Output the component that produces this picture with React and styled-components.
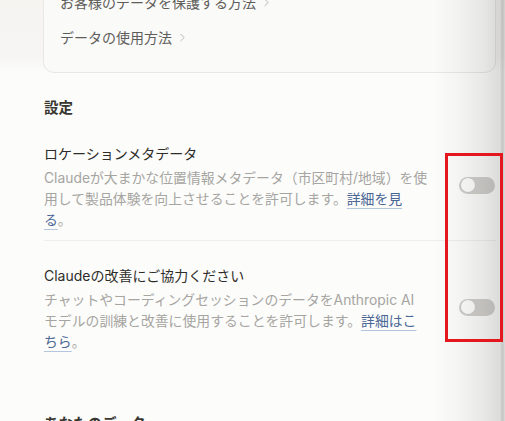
import React from 'react'
import styled, { createGlobalStyle } from 'styled-components'
import { ChevronRight } from 'lucide-react'

const GlobalStyle = createGlobalStyle`
  html, body {
    margin: 0;
    padding: 0;
    background: #fcfcfb;
  }
  body {
    font-family: "Inter", "Noto Sans CJK JP", sans-serif;
    -webkit-font-smoothing: antialiased;
  }
`

// line breaks follow the original wrap of the narrow settings column
const settings = [
  {
    title: 'ロケーションメタデータ',
    body: 'Claudeが大まかな位置情報メタデータ（市区町村/地域）を使\n用して製品体験を向上させることを許可します。',
    link: '詳細を見\nる',
  },
  {
    title: 'Claudeの改善にご協力ください',
    body: 'チャットやコーディングセッションのデータをAnthropic AI\nモデルの訓練と改善に使用することを許可します。',
    link: '詳細はこ\nちら',
  },
]

export default function App() {
  return (
    <>
      <GlobalStyle />
      <Page>
        <Content>
          <InfoCard>
            <CardLink>
              お客様のデータを保護する方法 <ChevronRight size={13} strokeWidth={1.4} />
            </CardLink>
            <CardLink>
              データの使用方法 <ChevronRight size={13} strokeWidth={1.4} />
            </CardLink>
          </InfoCard>

          <SectionTitle>設定</SectionTitle>
          <SettingsList>
            {settings.map((s, i) => (
              <SettingRow key={s.title} $last={i === settings.length - 1}>
                <SettingText>
                  <SettingTitle>{s.title}</SettingTitle>
                  <SettingDesc>
                    {s.body}
                    <DocLink href="#">{s.link}</DocLink>。
                  </SettingDesc>
                </SettingText>
                <Toggle role="switch" aria-checked="false">
                  <Knob />
                </Toggle>
              </SettingRow>
            ))}
          </SettingsList>

          <SectionTitle $spaced>あなたのデータ</SectionTitle>
        </Content>
        <EdgeShade />
        <Highlight />
      </Page>
    </>
  )
}

const Page = styled.div`
  position: relative;
  height: 421px;
  overflow: hidden;
  background: linear-gradient(
    to bottom,
    #f5f4f1 0,
    #f6f5f3 58px,
    #fcfcfb 72px
  );
`

const Content = styled.div`
  padding: 0 9px 0 44px;
`

const InfoCard = styled.div`
  margin-top: -33px;
  margin-left: -1px;
  padding: 16px 16px 18px;
  background: #fafaf9;
  border: 1px solid #e8e7e3;
  border-radius: 11px;
`

const CardLink = styled.div`
  display: flex;
  align-items: center;
  gap: 4px;
  height: 35px;
  color: #5e5d59;
  font-size: 14px;

  svg {
    color: #a3a29e;
    margin-top: 1px;
  }
`

const SectionTitle = styled.h2`
  margin: ${({ $spaced }) => ($spaced ? '60px 0 0' : '24px 0 0')};
  font-size: 14.5px;
  line-height: 21px;
  font-weight: 600;
  color: #37362f;
`

const SettingsList = styled.div`
  display: flex;
  flex-direction: column;
`

const SettingRow = styled.div`
  display: flex;
  align-items: center;
  justify-content: space-between;
  padding: ${({ $last }) => ($last ? '24px 0 0' : '25px 0 9px')};
  border-bottom: ${({ $last }) => ($last ? 'none' : '1px solid #efeeeb')};
`

const SettingText = styled.div`
  width: 400px;
`

const SettingTitle = styled.div`
  font-size: 14px;
  line-height: 21px;
  color: #2e2d29;
`

const SettingDesc = styled.p`
  margin: 4px 0 0;
  font-size: 13.85px;
  line-height: 21px;
  color: #a6a5a1;
  white-space: pre-line;
`

const DocLink = styled.a`
  color: #4a6794;
  text-decoration: underline;
  text-decoration-color: #b4c5de;
  text-underline-offset: 4px;
  text-decoration-thickness: 1px;
`

const Toggle = styled.div`
  flex: none;
  width: 36px;
  height: 17px;
  margin: 0 1px 4px 0;
  padding: 2px;
  box-sizing: border-box;
  border-radius: 999px;
  background: #d0cfcb;
  display: flex;
  align-items: center;
`

const Knob = styled.div`
  width: 14px;
  height: 14px;
  border-radius: 50%;
  background: #fdfdfc;
  box-shadow: 0 0 0 0.5px rgba(0, 0, 0, 0.05);
`

const EdgeShade = styled.div`
  position: absolute;
  top: 0;
  right: 0;
  bottom: 0;
  width: 72px;
  pointer-events: none;
  background:
    linear-gradient(
      to right,
      rgba(0, 0, 0, 0.1) 0,
      rgba(0, 0, 0, 0.22) 60%,
      rgba(0, 0, 0, 0.13) 100%
    ) right / 6px 100% no-repeat,
    linear-gradient(
      to right,
      rgba(0, 0, 0, 0) 0,
      rgba(0, 0, 0, 0.03) 25px,
      rgba(0, 0, 0, 0.08) 50px,
      rgba(0, 0, 0, 0.13) 66px
    ) left / calc(100% - 6px) 100% no-repeat;
`

const Highlight = styled.div`
  position: absolute;
  left: 445px;
  top: 153px;
  width: 58px;
  height: 189px;
  box-sizing: border-box;
  border: 3px solid #e3171d;
  pointer-events: none;
`
